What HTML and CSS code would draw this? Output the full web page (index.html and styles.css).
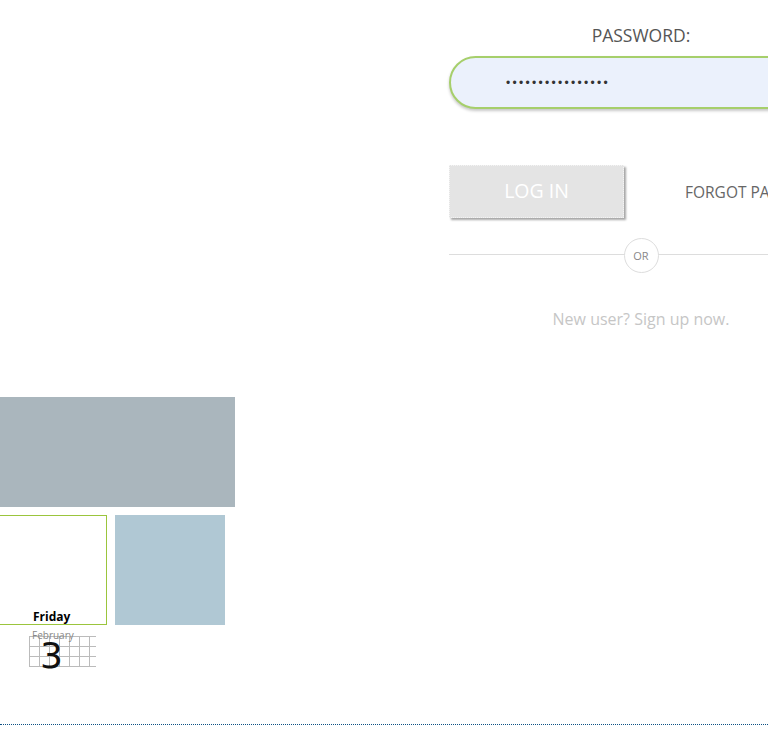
FILE: index.html
```html
<!DOCTYPE html>
<html>
<head>
<meta charset="utf-8">
<link rel="stylesheet" href="styles.css">
</head>
<body>
<div class="page">
  <div class="main">
    <div class="left">
      <div class="tile-wide"></div>
      <div class="tile-row">
        <div class="tile-cal"></div>
        <div class="tile-blue"></div>
      </div>
      <div class="cal">
        <div class="cal-day">Friday</div>
        <div class="cal-grid">
          <div class="cal-month">February</div>
          <div class="cal-num">3</div>
        </div>
      </div>
    </div>
    <div class="right">
      <div class="label">PASSWORD:</div>
      <div class="input"><span class="dots">••••••••••••••••</span></div>
      <div class="actions">
        <div class="btn">LOG IN</div>
        <div class="forgot">FORGOT PASSWORD?</div>
      </div>
      <div class="divider"><span class="or">OR</span></div>
      <div class="signup">New user? Sign up now.</div>
    </div>
  </div>
  <div class="footer"></div>
</div>
</body>
</html>
```
FILE: styles.css
```css
html, body {
  margin: 0;
  padding: 0;
  background: #fff;
}
body {
  width: 768px;
  height: 733px;
  overflow: hidden;
  font-family: "Open Sans", "Liberation Sans", sans-serif;
}
.page {
  width: 768px;
}
.main {
  display: flex;
  height: 724px;
}
.left {
  width: 235px;
  flex-shrink: 0;
  padding-top: 397px;
  box-sizing: border-box;
}
.tile-wide {
  width: 235px;
  height: 110px;
  background: #aab6bd;
}
.tile-row {
  display: flex;
  margin-top: 8px;
  gap: 8px;
}
.tile-cal {
  width: 107px;
  height: 110px;
  box-sizing: border-box;
  border: 1px solid #9bc53d;
  border-left: none;
}
.tile-blue {
  width: 110px;
  height: 110px;
  background: #b0c8d4;
}
.cal {
  margin-top: -16px;
  margin-left: 20px;
  width: 76px;
}
.cal-day {
  background: #fff;
  font-family: "Open Sans", sans-serif;
  font-weight: 700;
  font-size: 12px;
  line-height: 16px;
  height: 16px;
  padding-left: 13px;
  color: #000;
}
.cal-grid {
  display: flow-root;
  margin-top: 11px;
  margin-left: 9px;
  width: 67px;
  height: 31px;
  box-sizing: border-box;
  background-image:
    linear-gradient(to right, #bbb 1px, transparent 1px),
    linear-gradient(to bottom, #bbb 1px, transparent 1px);
  background-size: 10px 10px;
  border-bottom: 1px solid #bbb;
}
.cal-month {
  font-family: "Open Sans", sans-serif;
  font-size: 10px;
  line-height: 10px;
  color: #888;
  margin-top: -6px;
  margin-left: 3px;
  height: 10px;
}
.cal-num {
  font-family: "DejaVu Sans", sans-serif;
  font-size: 36px;
  line-height: 28px;
  color: #111;
  margin-left: 11px;
  margin-top: 2px;
}
.right {
  flex-shrink: 0;
  width: 384px;
  margin-left: 214px;
  padding-top: 23px;
  box-sizing: border-box;
}
.label {
  text-align: center;
  font-size: 17.5px;
  line-height: 24px;
  color: #555;
}
.input {
  margin-top: 9px;
  height: 53px;
  box-sizing: border-box;
  border: 2px solid #a6cf6b;
  border-radius: 27px;
  background: #ebf1fc;
  box-shadow: 0 2px 3px rgba(0, 0, 0, 0.22);
  display: flex;
  align-items: center;
  padding-left: 55px;
}
.dots {
  font-family: "Liberation Sans", sans-serif;
  font-size: 12px;
  letter-spacing: 2.3px;
  color: #333;
}
.actions {
  display: flex;
  align-items: center;
  margin-top: 56px;
}
.btn {
  flex-shrink: 0;
  width: 175px;
  height: 53px;
  box-sizing: border-box;
  background: #e4e4e4;
  border: 1px dotted #f4f4f4;
  box-shadow: 2px 2px 2px rgba(0, 0, 0, 0.35);
  color: #fff;
  font-size: 19.5px;
  line-height: 49px;
  text-align: center;
}
.forgot {
  margin-left: 61px;
  font-size: 15.5px;
  color: #666;
  white-space: nowrap;
}
.divider {
  margin-top: 19px;
  height: 36px;
  display: flex;
  align-items: center;
  justify-content: center;
  background: linear-gradient(#ddd, #ddd) 0 17px / 100% 1px no-repeat;
}
.or {
  width: 35px;
  height: 35px;
  box-sizing: border-box;
  border: 1px solid #ddd;
  border-radius: 50%;
  background: #fff;
  font-size: 11px;
  color: #888;
  display: flex;
  align-items: center;
  justify-content: center;
}
.signup {
  margin-top: 36px;
  text-align: center;
  font-size: 16px;
  line-height: 20px;
  color: #c6c6c6;
}
.footer {
  border-top: 1px dotted #0d5184;
}
```
